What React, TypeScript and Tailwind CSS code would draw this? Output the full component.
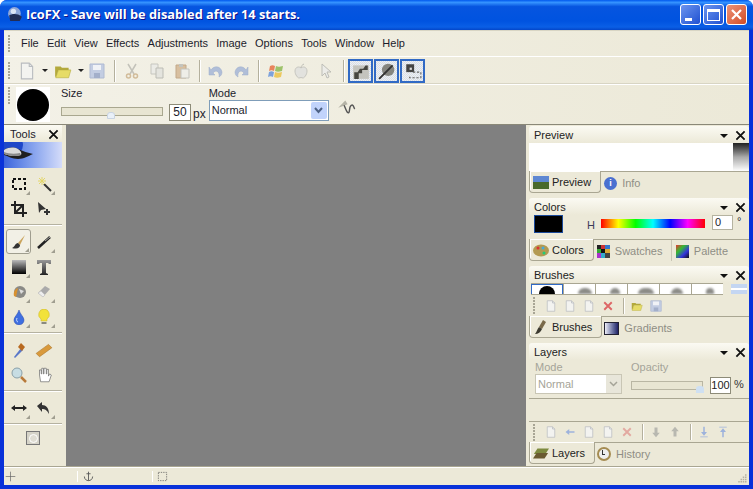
import type { ReactNode } from 'react';

const font = "font-['Liberation_Sans',Arial,sans-serif]";

function Svg({ s = 16, children, className = '' }: { s?: number; children: ReactNode; className?: string }) {
  return (
    <svg width={s} height={s} viewBox="0 0 16 16" className={`shrink-0 ${className}`}>
      {children}
    </svg>
  );
}

const Gripper = ({ className = '' }: { className?: string }) => (
  <div className={`flex flex-col gap-[1px] ${className}`}>
    {[0, 1, 2, 3, 4, 5].map((i) => (
      <div key={i} className="h-[2px] w-[2px] bg-[#a8a595]" />
    ))}
  </div>
);

const Sep = ({ h = 'h-[22px]' }: { h?: string }) => <div className={`w-[2px] ${h} border-l border-[#b4b09d] bg-white`} />;
const Arrow = () => <div className="h-0 w-0 border-x-[3px] border-t-[3px] border-x-transparent border-t-[#222]" />;

const Doc = ({ s = 16, o = 1 }: { s?: number; o?: number }) => (
  <Svg s={s}>
    <path d="M3 1h7l3 3v11H3z" fill="#f3f3f0" stroke="#b9bcc0" opacity={o} />
    <path d="M10 1v3h3" fill="none" stroke="#b9bcc0" />
  </Svg>
);
const Folder = ({ s = 16 }: { s?: number }) => (
  <Svg s={s}>
    <path d="M1 4h5l1 1h6v2H4l-2 6H1z" fill="#b3a93c" />
    <path d="M4 7h11l-2 7H1.500z" fill="#e6dc66" stroke="#b3a93c" strokeWidth=".5" />
  </Svg>
);
const Floppy = ({ s = 16 }: { s?: number }) => (
  <Svg s={s}>
    <path d="M1 1h14v14H1z" fill="#c3cde2" stroke="#afbad2" />
    <path d="M4 2h8v5H4z" fill="#f0f2f6" />
    <path d="M5 10h6v5H5z" fill="#a3afca" />
  </Svg>
);
const Cut = () => (
  <Svg>
    <path d="M4 1l6 10M12 1L6 11" stroke="#c3c2ba" strokeWidth="1.500" fill="none" />
    <circle cx="4.500" cy="13" r="2" fill="none" stroke="#d2bc9a" strokeWidth="1.500" />
    <circle cx="11.500" cy="13" r="2" fill="none" stroke="#d2bc9a" strokeWidth="1.500" />
  </Svg>
);
const Copy = () => (
  <Svg>
    <path d="M2 1h7v10H2z" fill="#ebebe6" stroke="#c6c6bf" />
    <path d="M7 5h7v10H7z" fill="#e4e4de" stroke="#bcbcb5" />
  </Svg>
);
const Paste = () => (
  <Svg>
    <path d="M2 2h10v13H2z" fill="#d8bf9f" stroke="#c2a98a" />
    <path d="M5 1h4v3H5z" fill="#c4c4bd" />
    <path d="M7 6h8v9H7z" fill="#eeeee8" stroke="#c4c4bd" />
  </Svg>
);
const Undo = ({ flip = false }: { flip?: boolean }) => (
  <Svg className={flip ? '-scale-x-100' : ''}>
    <path d="M3 7c3-5 10-4 11 2 0 2-1 4-3 5 1-5-3-8-6-4l2 2H1V4z" fill="#b0bed8" stroke="#9dacc9" strokeWidth=".5" />
  </Svg>
);
const WinLogo = () => (
  <Svg>
    <path d="M2 3c2-1 3-1 5 0l-1 5c-2-1-3-1-5 0z" fill="#e8845c" />
    <path d="M8 3c2 1 3 1 7 0l-1 5c-3 1-5 1-7 0z" fill="#9dc26a" />
    <path d="M1 9c2-1 3-1 5 0l-1 5c-2-1-3-1-5 0z" fill="#7da2dc" />
    <path d="M7 9c2 1 4 1 7 0l-1 5c-3 1-5 1-7 0z" fill="#ecc95f" />
  </Svg>
);
const Apple = () => (
  <Svg>
    <path d="M8 5c-2-2-6-1-6 3 0 4 3 7 4 7s1-.5 2-.5 1 .5 2 .5 4-3 4-7c0-4-4-5-6-3z" fill="#e2e2de" stroke="#c6c6bf" />
    <path d="M8 5c0-2 1-3 3-4" stroke="#bdbdb6" fill="none" />
  </Svg>
);
const Cursor = () => (
  <Svg>
    <path d="M4 1l9 8H9l2 5-2 1-2-5-3 3z" fill="#ecece8" stroke="#bdbdb6" />
  </Svg>
);
const X = () => (
  <Svg s={11}>
    <path d="M2 2l12 12M14 2L2 14" stroke="#111" strokeWidth="2.600" />
  </Svg>
);

function Toggle({ children }: { children: ReactNode }) {
  return (
    <div className="flex h-[24px] w-[25px] items-center justify-center border-2 border-[#316ac5] bg-[repeating-conic-gradient(#d3dcef_0%_25%,#f3f2ea_0%_50%)] bg-[length:2px_2px]">
      {children}
    </div>
  );
}

function Panel({ title, children, className = '' }: { title: string; children: ReactNode; className?: string }) {
  return (
    <section className={`flex flex-col ${className}`}>
      <header className="flex h-[17px] shrink-0 items-center justify-between rounded-t-[3px] bg-gradient-to-b from-[#fbfaf3] to-[#ece9d8] pl-[5px] pr-[3px] pt-[2px] text-[#222]">
        <span>{title}</span>
        <span className="flex items-center gap-[7px]">
          <span className="border-x-[4px] border-t-[4px] border-x-transparent border-t-[#111]" />
          <X />
        </span>
      </header>
      {children}
    </section>
  );
}

function Tabs({ active, others, pr = 'pr-[9px]' }: { active: [ReactNode, string]; others: [ReactNode, string, number][]; pr?: string }) {
  return (
    <div className="flex h-[22px] shrink-0 border-t border-[#a9a692] text-[#8f8e85]">
      <div className={`-mt-px flex items-center gap-[3px] rounded-b-[4px] border-x border-b border-[#a9a692] bg-[#ece9d8] pl-[3px] ${pr} pt-px text-[#222] shadow-[1px_1px_0_#fff_inset]`}>
        <div className="flex w-[16px] justify-center">{active[0]}</div>
        <span>{active[1]}</span>
      </div>
      {others.map(([ic, label, w], i) => (
        <div key={label} style={{ width: w }} className={`flex items-center gap-[5px] pl-[2px] pt-px ${i > 0 ? 'border-l border-[#c9c6b5] pl-[4px]' : ''}`}>
          {ic}
          <span>{label}</span>
        </div>
      ))}
    </div>
  );
}

function Tool({ children, corner = true, active = false }: { children: ReactNode; corner?: boolean; active?: boolean }) {
  return (
    <div className={`relative flex h-[25px] w-[25px] items-center justify-center rounded-[3px] ${active ? 'border border-[#9f9d8e] bg-[#f2f0e6]' : ''}`}>
      {children}
      {corner && (
        <div className="absolute bottom-[1px] right-[1px] h-0 w-0 border-b-[4px] border-l-[4px] border-b-[#a09e90] border-l-transparent" />
      )}
    </div>
  );
}

const ToolRow = ({ children }: { children: ReactNode }) => <div className="flex gap-0">{children}</div>;
const ToolSep = () => <div className="my-[3px] -ml-[2px] h-[2px] w-[58px] border-t border-[#b5b2a1] bg-white" />;

const brushBlurs = ['ml-[14px] w-[14px]', 'ml-[14px] w-[10px]', 'ml-[10px] w-[16px]', 'ml-[11px] w-[12px]', 'ml-[14px] w-[8px]'];

export default function App() {
  return (
    <div className={`${font} flex h-[489px] w-[753px] flex-col overflow-hidden rounded-t-[7px] bg-[#0831d9] text-[11px] leading-[13px]`}>
      {/* title bar */}
      <div className="flex h-[30px] shrink-0 items-center bg-[linear-gradient(#0058ee_0%,#3593ff_8%,#0655e0_22%,#0053e0_70%,#0a5fe6_90%,#0346c9_100%)] pl-[7px] pr-[6px] pb-[1px]">
        <svg width="17" height="17" viewBox="0 0 16 16" className="mr-[2px]">
          <circle cx="7" cy="7" r="6" fill="#8ea6d8" />
          <path d="M2 9c3-2 8-2 12 1l-2 4H3z" fill="#222d55" />
          <circle cx="6" cy="5" r="2.500" fill="#dde5f5" />
        </svg>
        <span className="text-[12.800px] font-bold text-white [font-family:'Open_Sans',sans-serif] [text-shadow:1px_1px_#0f1089]">
          IcoFX - Save will be disabled after 14 starts.
        </span>
        <div className="ml-auto flex gap-[2px]">
          <div className="flex h-[21px] w-[21px] items-end rounded-[3px] border border-white bg-gradient-to-br from-[#6d94ee] to-[#1f4fd1] pb-[3px] pl-[4px]">
            <div className="h-[3px] w-[7px] bg-white" />
          </div>
          <div className="flex h-[21px] w-[21px] items-center justify-center rounded-[3px] border border-white bg-gradient-to-br from-[#6d94ee] to-[#1f4fd1]">
            <div className="h-[12px] w-[13px] border border-t-[3px] border-white" />
          </div>
          <div className="flex h-[21px] w-[21px] items-center justify-center rounded-[3px] border border-white bg-gradient-to-br from-[#ec9277] to-[#d24b22]">
            <svg width="13" height="13" viewBox="0 0 13 13">
              <path d="M2 2l9 9M11 2l-9 9" stroke="#fff" strokeWidth="2.200" />
            </svg>
          </div>
        </div>
      </div>

      <div className="mx-[4px] flex min-h-0 flex-1 flex-col bg-[#ece9d8] text-[#1c1c2c]">
        {/* menu */}
        <div className="flex h-[27px] shrink-0 items-center border-b border-white bg-gradient-to-r from-[#f3f1e7] to-[#ece9d8] pl-[4px] shadow-[0_1px_0_#d8d5c4_inset]">
          <Gripper className="mr-[11px]" />
          <nav className="flex gap-[8.200px]">
            {['File', 'Edit', 'View', 'Effects', 'Adjustments', 'Image', 'Options', 'Tools', 'Window', 'Help'].map((m) => (
              <span key={m}>{m}</span>
            ))}
          </nav>
        </div>

        {/* main toolbar */}
        <div className="flex h-[28px] shrink-0 items-center border-b border-white bg-gradient-to-r from-[#f3f1e7] to-[#ece9d8] pl-[4px] shadow-[0_-1px_0_#d8d5c4_inset]">
          <Gripper className="mr-[8px]" />
          <Doc s={18} />
          <div className="ml-[6px] mr-[6px]"><Arrow /></div>
          <Folder s={18} />
          <div className="ml-[6px] mr-[5px]"><Arrow /></div>
          <Floppy />
          <div className="ml-[9px]"><Sep /></div>
          <div className="ml-[8px]"><Cut /></div>
          <div className="ml-[9px]"><Copy /></div>
          <div className="ml-[9px] mr-[9px]"><Paste /></div>
          <Sep />
          <div className="ml-[7px]"><Undo /></div>
          <div className="ml-[9px] mr-[9px]"><Undo flip /></div>
          <Sep />
          <div className="ml-[8px]"><WinLogo /></div>
          <div className="ml-[9px]"><Apple /></div>
          <div className="ml-[9px] mr-[9px]"><Cursor /></div>
          <Sep />
          <div className="ml-[3px] flex gap-[1px]">
            <Toggle>
              <Svg s={18}>
                <path d="M1 3h14v12H1z" fill="#c4c4be" />
                <path d="M2 15V9h3l2-3h3l2-3h2v4H9v3H6v5z" fill="#45453f" />
              </Svg>
            </Toggle>
            <Toggle>
              <Svg s={18}>
                <circle cx="9" cy="7" r="5.500" fill="#85857f" />
                <path d="M1 15L13 3" stroke="#333" strokeWidth="1.800" />
              </Svg>
            </Toggle>
            <Toggle>
              <Svg s={18}>
                <path d="M2 2h7v7H2z" fill="#444" />
                <path d="M5 5h2v2H5z" fill="#ddd" />
                <path d="M8 9h7v5H5v-2" fill="none" stroke="#666" strokeDasharray="2 1.500" />
              </Svg>
            </Toggle>
          </div>
        </div>

        {/* options */}
        <div className="flex h-[40px] shrink-0 items-start border-b border-[#8a8878] bg-gradient-to-r from-[#f3f1e7] to-[#ece9d8] pl-[4px]">
          <Gripper className="mr-[6px] mt-[2px]" />
          <div className="mt-[2px] flex h-[35px] w-[34px] items-center justify-center bg-white">
            <div className="h-[32px] w-[32px] rounded-full bg-black" />
          </div>
          <div className="ml-[11px] mt-[2px] w-[108px]">
            <div className="h-[14px]">Size</div>
            <div className="relative mt-[6px] h-[9px] w-[102px] border border-[#a9a78f] bg-[#e8e5d2]">
              <div className="absolute left-[45px] top-[4px] h-[7px] w-[8px] rounded-t-[3px] border border-[#c9d4e2] bg-[#e9f0f8]" />
            </div>
          </div>
          <div className="mt-[19px] flex h-[17px] w-[22px] items-center justify-center border border-[#8d8b78] bg-white text-[12px]">50</div>
          <span className="ml-[2px] mt-[23px] text-[12px]">px</span>
          <div className="ml-[3px] mt-[2px] w-[120px]">
            <div className="h-[13px]">Mode</div>
            <div className="flex h-[21px] items-center justify-between border border-[#7f9db9] bg-white pl-[2px] pr-[1px]">
              <span>Normal</span>
              <div className="flex h-[17px] w-[16px] items-center justify-center rounded-[2px] bg-[#c1d3fb]">
                <svg width="9" height="7" viewBox="0 0 9 7">
                  <path d="M1 1l3.500 4L8 1" fill="none" stroke="#4d6185" strokeWidth="2" />
                </svg>
              </div>
            </div>
          </div>
          <div className="ml-[8px] mt-[12px]">
            <Svg s={19}>
              <path d="M1 9l6-6 2 3-5 2" fill="#b5b3a6" />
              <path d="M6 7c2 5 3 7 4 6s0-5 2-6 2 2 3 3" fill="none" stroke="#555" strokeWidth="1.200" />
            </Svg>
          </div>
        </div>

        {/* body */}
        <div className="flex min-h-0 flex-1">
          {/* tools */}
          <aside className="flex w-[62px] shrink-0 flex-col">
            <div className="flex h-[17px] w-[58px] shrink-0 items-center justify-between bg-gradient-to-b from-[#fbfaf3] to-[#ece9d8] pl-[6px] pr-[3px] pt-[2px]">
              <span>Tools</span>
              <X />
            </div>
            <div className="flex h-[26px] w-[58px] shrink-0 items-center overflow-hidden bg-gradient-to-r from-[#3c64dc] to-[#d5dcf9]">
              <svg width="34" height="26" viewBox="0 0 34 26" className="shrink-0">
                <circle cx="9" cy="3" r="10" fill="#1e46c8" />
                <path d="M0 8c5-3 10-3 14-1 5 2 10 4 15 5-5 2-9 5-15 5-6 0-10-3-14-4z" fill="#1f1f1f" />
                <path d="M0 8c5-3 10-3 14-1 3 2 4 4 3 6-5 2-11 1-17-1z" fill="#d9d9d9" />
                <path d="M0 10c5 2 11 2 16 1l1 2c-5 2-11 1-17-1z" fill="#8a8a8a" />
              </svg>
            </div>
            <div className="flex flex-col pl-[2px] pt-[3px]">
              <ToolRow>
                <Tool>
                  <Svg><rect x="2" y="3" width="12" height="10" fill="none" stroke="#111" strokeWidth="2" strokeDasharray="3 2" /></Svg>
                </Tool>
                <Tool>
                  <Svg>
                    <path d="M8 8l7 7" stroke="#333" strokeWidth="2" />
                    <path d="M6 1v8M2 5h8M3 2l6 6M9 2L3 8" stroke="#e3d66a" />
                  </Svg>
                </Tool>
              </ToolRow>
              <ToolRow>
                <Tool corner={false}>
                  <Svg><path d="M4 0v12h12M0 4h12v12M4 12L12 4" fill="none" stroke="#222" strokeWidth="2" /></Svg>
                </Tool>
                <Tool corner={false}>
                  <Svg>
                    <path d="M2 1l8 7-5 1-2 3z" fill="#333" />
                    <path d="M11 8v6M8 11h6" stroke="#333" strokeWidth="2" />
                  </Svg>
                </Tool>
              </ToolRow>
              <ToolSep />
              <ToolRow>
                <Tool active>
                  <Svg>
                    <path d="M14 1L7 9l2 2z" fill="#caa35c" />
                    <path d="M7 9c-3 0-3 4-6 5 3 1 8 1 8-3z" fill="#333" />
                  </Svg>
                </Tool>
                <Tool>
                  <Svg><path d="M2 14L14 3" stroke="#222" strokeWidth="2.500" /><path d="M9 7l5-4" stroke="#a9a9a3" strokeWidth="1" /></Svg>
                </Tool>
              </ToolRow>
              <ToolRow>
                <Tool>
                  <svg width="16" height="16"><defs><linearGradient id="g1" x1="0" y1="0" x2="0" y2="1"><stop offset="0" stopColor="#bbb" /><stop offset="1" stopColor="#000" /></linearGradient></defs><rect x="1" y="1" width="14" height="14" fill="url(#g1)" /></svg>
                </Tool>
                <Tool corner={false}>
                  <svg width="16" height="16" viewBox="0 0 16 16"><defs><linearGradient id="g2" x1="0" y1="0" x2="0" y2="1"><stop offset="0" stopColor="#999" /><stop offset="1" stopColor="#222" /></linearGradient></defs><path d="M1 1h14v4h-2l-1-1H10v10l2 1v1H4v-1l2-1V4H4L3 5H1z" fill="url(#g2)" /></svg>
                </Tool>
              </ToolRow>
              <ToolRow>
                <Tool>
                  <Svg><circle cx="9" cy="8" r="6" fill="#8a8a86" /><path d="M3 12c-1-4 1-7 4-8l-2 9z" fill="#d9912e" /><path d="M8 5l5 2-3 3z" fill="#ddd" /></Svg>
                </Tool>
                <Tool>
                  <Svg><path d="M2 9l7-7 5 3-7 8z" fill="#aaa" /><path d="M2 9l5 4 2-2-4-4z" fill="#eee" stroke="#bbb" strokeWidth=".5" /></Svg>
                </Tool>
              </ToolRow>
              <ToolRow>
                <Tool>
                  <Svg><path d="M8 1c1 4 5 7 5 10a5 5 0 0 1-10 0c0-3 4-6 5-10z" fill="#3f6fe0" stroke="#2848a8" strokeWidth=".5" /><path d="M6 9c-1 2 0 4 1 4" stroke="#cfe0ff" fill="none" /></Svg>
                </Tool>
                <Tool>
                  <Svg><path d="M8 0a5.500 5.500 0 0 1 3 10v2H5v-2A5.500 5.500 0 0 1 8 0z" fill="#f2e23a" stroke="#c8b32a" strokeWidth=".5" /><path d="M5.500 13h5v2h-5z" fill="#8a8a80" /></Svg>
                </Tool>
              </ToolRow>
              <ToolSep />
              <ToolRow>
                <Tool corner={false}>
                  <Svg><path d="M3 15l7-9 2 2-8 8z" fill="#5a78c8" /><path d="M10 1l4 4-3 4-4-4z" fill="#b86a20" /></Svg>
                </Tool>
                <Tool corner={false}>
                  <Svg s={18}><path d="M1 11L12 3l3 3-11 8z" fill="#d99a3c" stroke="#a87024" strokeWidth=".5" /></Svg>
                </Tool>
              </ToolRow>
              <ToolRow>
                <Tool corner={false}>
                  <Svg><circle cx="6" cy="6" r="5" fill="#c7dde3" stroke="#8aa0a8" /><path d="M10 10l5 5" stroke="#b87a3a" strokeWidth="2.500" /></Svg>
                </Tool>
                <Tool corner={false}>
                  <Svg s={18}><path d="M4 8V3.500h1.500V7h.5V2h1.500v5h.5V2H10v5h.5V3h1.500v6l1-2 1.500 1-2 6H5z" fill="#fff" stroke="#666" strokeWidth=".6" /></Svg>
                </Tool>
              </ToolRow>
              <ToolSep />
              <ToolRow>
                <Tool>
                  <Svg><path d="M0 8l4-3v2h8V5l4 3-4 3V9H4v2z" fill="#222" /></Svg>
                </Tool>
                <Tool>
                  <Svg><path d="M1 6l5-4v3c4 0 7 3 7 9-2-4-4-5-7-5v3z" fill="#333" /></Svg>
                </Tool>
              </ToolRow>
              <ToolSep />
              <div className="mt-[3px] flex justify-center pr-[6px]">
                <div className="flex h-[14px] w-[14px] items-center justify-center border border-[#777] bg-[#d5d3c8]">
                  <div className="h-[9px] w-[9px] rounded-full border border-white bg-[#dfddd3]" />
                </div>
              </div>
            </div>
          </aside>

          {/* canvas */}
          <main className="min-w-0 flex-1 bg-[#808080]" />

          {/* docked panels */}
          <aside className="flex w-[223px] shrink-0 flex-col pl-[3px] pt-[1px]">
            <Panel title="Preview" className="mb-[5px]">
              <div className="flex h-[28px] gap-0 bg-white">
                <div className="flex-1" />
                <div className="w-[16px] bg-gradient-to-b from-[#222] via-[#aaa] to-white" />
              </div>
              <Tabs
                active={[
                  <svg key="p" width="16" height="13">
                    <rect width="16" height="6" fill="#5e87d2" />
                    <rect y="6" width="16" height="7" fill="#4a6a2c" />
                  </svg>,
                  'Preview',
                ]}
                others={[[<div key="i" className="ml-[1px] flex h-[13px] w-[13px] items-center justify-center rounded-full bg-[#4a70d0] text-[9px] font-bold text-white">i</div>, 'Info', 60]]}
              />
            </Panel>
            <Panel title="Colors" className="mb-[5px]">
              <div className="flex h-[24px] items-start pl-[5px]">
                <div className="h-[18px] w-[29px] border border-[#1b4a9b] bg-black" />
                <span className="ml-[24px] mt-[4px] text-[#3c3c58]">H</span>
                <div className="ml-[6px] mt-[4px] h-[9px] w-[104px] bg-[linear-gradient(90deg,#f00,#ff0,#0f0,#0ff,#00f,#f0f,#f00)]" />
                <div className="ml-[7px] flex h-[15px] w-[21px] items-center border border-[#b5b3a0] bg-white pl-[2px]">0</div>
                <span className="ml-[4px]">°</span>
              </div>
              <Tabs
                active={[
                  <svg key="c" width="16" height="13" viewBox="0 0 16 13">
                    <ellipse cx="8" cy="6.500" rx="8" ry="6" fill="#b39a52" />
                    <circle cx="5" cy="4" r="1.500" fill="#d33" />
                    <circle cx="10" cy="4" r="1.500" fill="#4ad" />
                    <circle cx="11" cy="9" r="1.500" fill="#2c7" />
                  </svg>,
                  'Colors',
                ]}
                others={[
                  [<div key="s" className="ml-[1px] grid h-[13px] w-[13px] grid-cols-3 grid-rows-3">{['#222', '#c33', '#37c', '#3a3', '#111', '#da3', '#a3c', '#3ac', '#444'].map((c, i) => <i key={i} style={{ background: c }} />)}</div>, 'Swatches', 77],
                  [<div key="pl" className="h-[13px] w-[13px] bg-[linear-gradient(135deg,#e33,#3b3,#33d,#111)]" />, 'Palette', 60],
                ]}
              />
            </Panel>
            <Panel title="Brushes" className="mb-[5px]">
              <div className="flex h-[12px] items-start pl-[2px]">
                <div className="flex h-[12px] w-[192px] border-y border-[#a9a692] bg-white">
                  <div className="flex h-[10px] w-[32px] shrink-0 items-start justify-center overflow-hidden border-x border-t border-[#316ac5]">
                    <div className="mt-[1px] h-[16px] w-[16px] shrink-0 rounded-full bg-black" />
                  </div>
                  {brushBlurs.map((b, i) => (
                    <div key={i} className="flex w-[32px] shrink-0 items-end overflow-hidden border-l border-[#a9a692]">
                      <div className={`h-[6px] ${b} rounded-t-full bg-[#8c8c88] blur-[1px]`} />
                    </div>
                  ))}
                </div>
                <div className="ml-[8px] mt-[1px] h-[10px] w-[16px] border-y-[4px] border-[#c4d6f2] bg-white" />
              </div>
              <div className="flex h-[21px] items-center pl-[4px]">
                <Gripper className="mr-[10px]" />
                <Doc s={12} />
                <div className="ml-[7px]"><Doc s={12} /></div>
                <div className="ml-[7px]"><Doc s={12} /></div>
                <Svg s={12} className="ml-[7px]"><path d="M3 3l10 10M13 3L3 13" stroke="#d66" strokeWidth="2.500" /></Svg>
                <div className="ml-[9px] mr-[6px]"><Sep h="h-[16px]" /></div>
                <Folder s={12} />
                <div className="ml-[7px]"><Floppy s={12} /></div>
              </div>
              <Tabs
                active={[
                  <Svg key="b" s={16}><path d="M10 1l3 2-4 7-3-2z" fill="#7a6a4a" /><path d="M6 8l3 2c-1 3-4 5-7 5 2-2 2-5 4-7z" fill="#3c3a30" /></Svg>,
                  'Brushes',
                ]}
                others={[[<div key="g" className="h-[13px] w-[15px] border border-[#223] bg-gradient-to-r from-[#eeeef8] to-[#222266]" />, 'Gradients', 80]]}
              />
            </Panel>
            <Panel title="Layers" className="flex-1">
              <div className="flex h-[38px] items-start pl-[6px] text-[#a5a498]">
                <div className="w-[96px]">
                  <div className="h-[14px] pt-[1px]">Mode</div>
                  <div className="flex h-[20px] w-[87px] items-center justify-between border border-[#c9c6b5] bg-white pl-[2px]">
                    <span>Normal</span>
                    <div className="flex h-[18px] w-[15px] items-center justify-center bg-[#e8e6da]">
                      <svg width="9" height="6" viewBox="0 0 9 6">
                        <path d="M1 1l3.500 3.500L8 1" fill="none" stroke="#a5a498" strokeWidth="1.500" />
                      </svg>
                    </div>
                  </div>
                </div>
                <div className="w-[79px]">
                  <div className="h-[14px] pt-[1px]">Opacity</div>
                  <div className="relative mt-[7px] h-[9px] w-[72px] border border-[#b9b6a3] bg-[#e8e5d2]">
                    <div className="absolute left-[64px] top-[4px] h-[7px] w-[8px] rounded-t-[3px] bg-[#cfe0f2]" />
                  </div>
                </div>
                <div className="mt-[17px] flex h-[17px] w-[21px] items-center justify-center border border-[#8d8b78] bg-white text-[#222]">100</div>
                <span className="ml-[3px] mt-[18px] text-[#333]">%</span>
              </div>
              <div className="h-[24px] shrink-0 border-y border-[#a9a692]" />
              <div className="flex h-[20px] shrink-0 items-center pl-[4px]">
                <Gripper className="mr-[10px]" />
                <Doc s={12} />
                <Svg s={12} className="ml-[7px]"><path d="M2 8l5-4v8zM6 7h8v2H6z" fill="#9db2dc" /></Svg>
                <div className="ml-[7px]"><Doc s={12} /></div>
                <div className="ml-[7px]"><Doc s={12} /></div>
                <Svg s={12} className="ml-[7px]"><path d="M3 3l10 10M13 3L3 13" stroke="#e3a9a0" strokeWidth="2.500" /></Svg>
                <div className="ml-[9px] mr-[6px]"><Sep h="h-[16px]" /></div>
                <Svg s={12}><path d="M6 2h4v7h3l-5 6-5-6h3z" fill="#b8b8b0" /></Svg>
                <Svg s={12} className="ml-[7px]"><path d="M6 14h4V7h3L8 1 3 7h3z" fill="#b8b8b0" /></Svg>
                <div className="ml-[9px] mr-[6px]"><Sep h="h-[16px]" /></div>
                <Svg s={12}><path d="M7 1h2v7h3l-4 5-4-5h3zM3 14h10v1H3z" fill="#9db2dc" /></Svg>
                <Svg s={12} className="ml-[7px]"><path d="M7 15h2V8h3L8 3 4 8h3zM3 1h10v1H3z" fill="#9db2dc" /></Svg>
              </div>
              <Tabs
                active={[
                  <svg key="l" width="16" height="13" viewBox="0 0 18 13">
                    <path d="M5 1h13l-4 6H1z" fill="#7d8a3f" />
                    <path d="M4 6h13l-4 6H0z" fill="#6a5a30" />
                  </svg>,
                  'Layers',
                ]}
                others={[[<div key="h" className="relative h-[14px] w-[14px] rounded-full border-2 border-[#a58c52] bg-[#eee]"><div className="absolute left-[3px] top-[1px] h-[5px] w-[3px] border-b border-l border-[#333]" /></div>, 'History', 80]]}
              />
            </Panel>
          </aside>
        </div>

        {/* status */}
        <div className="flex h-[19px] shrink-0 items-center border-t border-[#a9a692] bg-[#ece9d8] shadow-[0_1px_0_#fff_inset]">
          <div className="flex w-[74px] items-center border-r border-white pl-[1px]">
            <Svg s={11}><path d="M8 1v14M1 8h14" stroke="#666" /></Svg>
          </div>
          <div className="flex w-[75px] items-center border-r border-white pl-[5px]">
            <Svg s={11}><path d="M8 1v13M2 8c0 4 3 6 6 6s6-2 6-6M5 4h6" fill="none" stroke="#555" strokeWidth="1.300" /></Svg>
          </div>
          <div className="pl-[4px]">
            <Svg s={11}><path d="M2 2h12v12H2z" fill="none" stroke="#555" strokeDasharray="2 1.500" /></Svg>
          </div>
          <div className="ml-auto mr-[1px] mt-[4px]">
            <Svg s={12}><path d="M13 3v2M10 6v2M13 6v2M7 9v2M10 9v2M13 9v2M4 12v2M7 12v2M10 12v2M13 12v2" stroke="#b5b2a1" strokeWidth="2" /></Svg>
          </div>
        </div>
      </div>
      <div className="h-[4px] shrink-0" />
    </div>
  );
}
